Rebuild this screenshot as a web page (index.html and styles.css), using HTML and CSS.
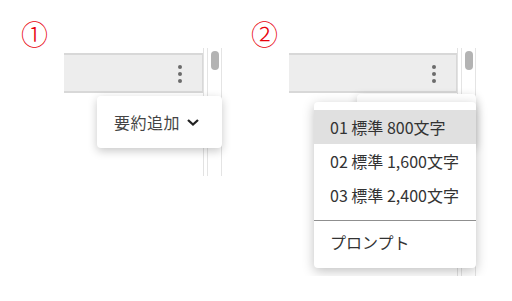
FILE: index.html
```html
<!DOCTYPE html>
<html lang="ja">
<head>
    <meta charset="UTF-8">
    <meta name="viewport" content="width=device-width, initial-scale=1.0">
    <title>要約追加メニュー</title>
    <link rel="stylesheet" href="styles.css">
</head>
<body>
    <div class="stage">
        <!-- ① 閉じた状態 -->
        <div class="panel panel-closed">
            <div class="num">①</div>
            <div class="window">
                <div class="content">
                    <div class="toolbar">
                        <span class="kebab"><i></i><i></i><i></i></span>
                    </div>
                </div>
                <div class="track"><div class="thumb"></div></div>

                <div class="add-btn">
                    <span>要約追加</span>
                    <svg class="chevron" viewBox="0 0 14 9">
                        <path d="M2 2 L7 6.5 L12 2" />
                    </svg>
                </div>
            </div>
        </div>

        <!-- ② 開いた状態 -->
        <div class="panel panel-open">
            <div class="num">②</div>
            <div class="window">
                <div class="content">
                    <div class="toolbar">
                        <span class="kebab"><i></i><i></i><i></i></span>
                    </div>
                </div>
                <div class="track"><div class="thumb"></div></div>

                <div class="add-btn behind"></div>

                <ul class="menu">
                    <li class="active">01 標準 800文字</li>
                    <li>02 標準 1,600文字</li>
                    <li>03 標準 2,400文字</li>
                    <li class="sep"></li>
                    <li>プロンプト</li>
                </ul>
            </div>
        </div>
    </div>
</body>
</html>
```

FILE: styles.css
```css
* {
    margin: 0;
    padding: 0;
    box-sizing: border-box;
}

body {
    background: #fff;
    font-family: 'Noto Sans CJK JP', 'Noto Sans', sans-serif;
    color: #333;
}

.stage {
    display: flex;
}

.panel {
    padding-top: 19px;
}

.panel-closed {
    width: 230px;
}

.panel-open {
    width: 282px;
}

.num {
    height: 29px;
    margin-left: 21px;
    font-size: 27px;
    line-height: 29px;
    font-weight: 300;
    color: #e8000b;
}

.window {
    position: relative;
    display: flex;
    height: 128px;
}

.panel-closed .window {
    margin-left: 64px;
}

.panel-open .window {
    margin-left: 59px;
    height: 228px;
}

.content {
    width: 140px;
    padding-top: 5px;
    border-right: 1px solid #e2e2e2;
}

.panel-open .content {
    width: 169px;
}

.toolbar {
    height: 40px;
    background: #ededed;
    border-top: 2px solid #d8d8d8;
    border-bottom: 2px solid #d8d8d8;
    border-right: 1px solid #d8d8d8;
    display: flex;
    align-items: center;
    justify-content: flex-end;
    padding-right: 20px;
}

.kebab {
    display: flex;
    flex-direction: column;
    gap: 3px;
    margin-top: 1px;
}

.kebab i {
    display: block;
    width: 4px;
    height: 4px;
    border-radius: 50%;
    background: #6b6b6b;
}

.track {
    width: 15px;
    margin-left: 3px;
    border-left: 1px solid #e4e4e4;
    border-right: 1px solid #e4e4e4;
    padding-top: 3px;
}

.thumb {
    width: 8px;
    height: 19px;
    margin: 0 auto;
    border-radius: 4px;
    background: #b3b3b3;
}

.add-btn {
    position: absolute;
    left: 33px;
    top: 48px;
    width: 125px;
    height: 52px;
    background: #fff;
    border-radius: 4px;
    box-shadow: 0 3px 10px rgba(0, 0, 0, 0.22);
    display: flex;
    align-items: center;
    padding-left: 17px;
    font-size: 16px;
    letter-spacing: 0.5px;
    color: #444;
}

.add-btn.behind {
    left: 68px;
    top: 46px;
    width: 119px;
}

.chevron {
    width: 14px;
    height: 9px;
    margin-left: 6px;
    margin-top: 1px;
    fill: none;
    stroke: #222;
    stroke-width: 2.3;
}

.menu {
    position: absolute;
    left: 25px;
    top: 54px;
    width: 162px;
    list-style: none;
    background: #fff;
    border-radius: 4px;
    box-shadow: 0 3px 12px rgba(0, 0, 0, 0.25);
    padding: 8px 0 9px;
    font-size: 16px;
    color: #333;
}

.menu li {
    height: 34px;
    line-height: 34px;
    padding-left: 16px;
}

.menu li.active {
    background: #e0e0e0;
}

.menu li.sep {
    height: 1px;
    margin: 8px 0 4px;
    background: #8f8f8f;
}
```
